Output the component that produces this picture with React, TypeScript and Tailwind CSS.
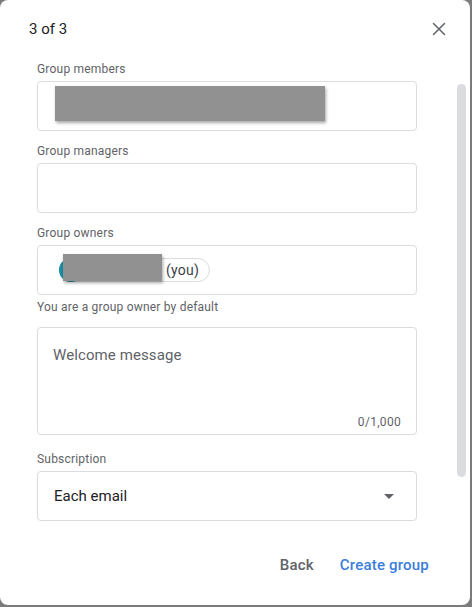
import { X } from 'lucide-react';

const font = { fontFamily: 'Roboto, "Liberation Sans", sans-serif' };

function Label({ children }: { children: React.ReactNode }) {
  return <p className="text-[12px] leading-4 tracking-[0.2px] text-[#5f6368]">{children}</p>;
}

function Redacted({ className }: { className: string }) {
  return <div className={`bg-[#919191] shadow-[1px_2px_3px_rgba(0,0,0,0.35)] ${className}`} />;
}

export default function App() {
  return (
    <div className="h-[607px] w-[472px] bg-[#7b7b7b]" style={font}>
      <div className="relative h-[605px] w-[470px] rounded-lg bg-white">
        <div className="flex items-center justify-between pl-[29px] pr-[20px] pt-[18px]">
          <h1 className="text-[15px] leading-5 text-[#202124]">3 of 3</h1>
          <X size={22} strokeWidth={1.6} className="text-[#5f6368]" />
        </div>

        <div className="ml-[37px] mt-[21px] w-[380px]">
          <Label>Group members</Label>
          <div className="mt-1 flex h-[50px] items-start rounded border border-[#dadce0] pl-[17px] pt-[4px]">
            <Redacted className="h-[35px] w-[270px]" />
          </div>

          <div className="mt-3">
            <Label>Group managers</Label>
            <div className="mt-1 h-[50px] rounded border border-[#dadce0]" />
          </div>

          <div className="mt-3">
            <Label>Group owners</Label>
            <div className="relative mt-1 h-[50px] rounded border border-[#dadce0]">
              <div className="absolute left-[21px] top-[12px] flex h-6 w-[151px] items-center justify-end rounded-full border border-[#dadce0] pr-[10px]">
                <span className="text-[14px] tracking-[0.2px] text-[#3c4043]">(you)</span>
              </div>
              <div className="absolute left-[21px] top-[12px] h-6 w-6 rounded-full bg-[#1a8fa3]" />
              <Redacted className="absolute left-[25px] top-[8px] h-[27px] w-[99px]" />
            </div>
            <p className="mt-1 text-[12px] leading-4 tracking-[0.2px] text-[#5f6368]">
              You are a group owner by default
            </p>
          </div>

          <div className="mt-3 flex h-[108px] flex-col justify-between rounded border border-[#dadce0] pb-[4px] pl-[15px] pr-[15px] pt-[17px]">
            <span className="text-[15px] leading-5 tracking-[0.1px] text-[#5f6368]">Welcome message</span>
            <span className="self-end text-[12px] leading-4 tracking-[0.3px] text-[#5f6368]">0/1,000</span>
          </div>

          <div className="mt-4">
            <Label>Subscription</Label>
            <div className="mt-1 flex h-[50px] items-center justify-between rounded border border-[#dadce0] pl-[16px] pr-[22px]">
              <span className="text-[15px] text-[#202124]">Each email</span>
              <svg width="10" height="5" viewBox="0 0 10 5">
                <path d="M0 0h10L5 5z" fill="#5f6368" />
              </svg>
            </div>
          </div>
        </div>

        <div className="mt-[33px] flex justify-end gap-[26px] pr-[41px]">
          <button className="text-[15px] font-medium tracking-[0.2px] text-[#5f6368]">Back</button>
          <button className="text-[15px] font-medium tracking-[0.2px] text-[#3b7ddd]">Create group</button>
        </div>

        {/* overlay scrollbar */}
        <div className="absolute left-[457px] top-[84px] h-[393px] w-[9px] rounded-full bg-[#dadce0]" />
      </div>
    </div>
  );
}
